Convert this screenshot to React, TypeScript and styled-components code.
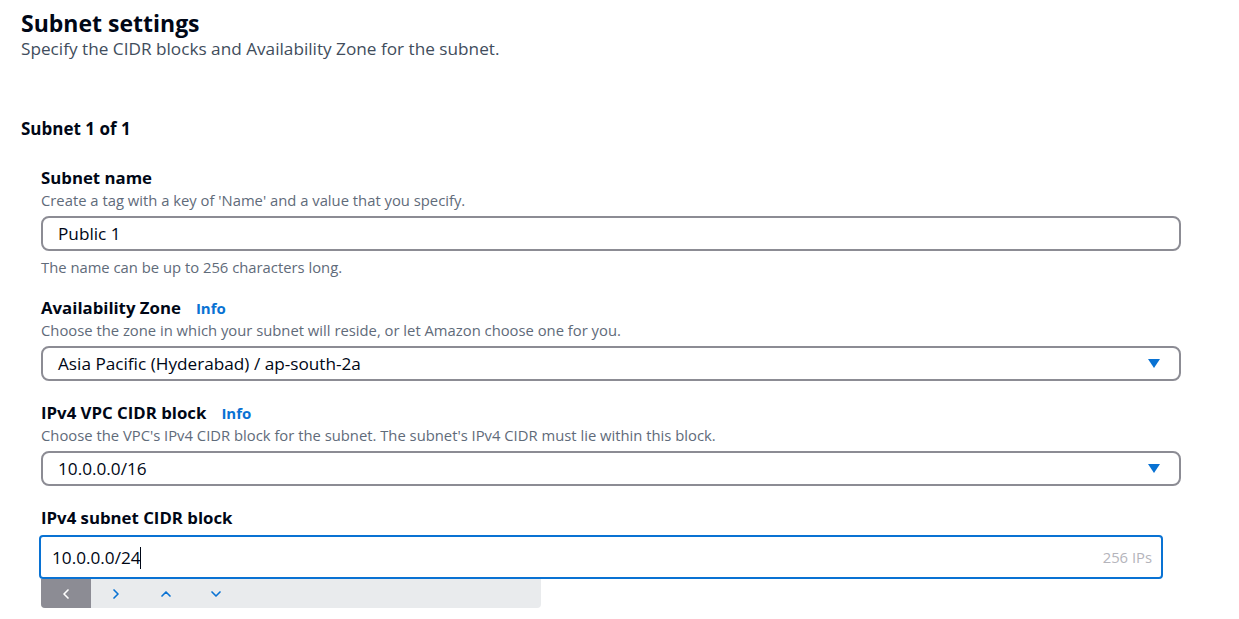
import React from "react";
import styled, { createGlobalStyle } from "styled-components";
import { ChevronLeft, ChevronRight, ChevronUp, ChevronDown } from "lucide-react";

const colors = {
	text: "#000716",
	sub: "#414d5c",
	muted: "#5f6b7a",
	border: "#8c8c94",
	blue: "#0972d3",
	toolbar: "#e9ebed",
	placeholder: "#b4b4bb",
};

const GlobalStyle = createGlobalStyle`
	body {
		margin: 0;
		background: #ffffff;
		font-family: "Open Sans", "Noto Sans", sans-serif;
		color: ${colors.text};
	}
`;

const Styled = {
	Page: styled("div")({
		padding: "8px 0 0 21px",
		width: "1160px",
	}),
	Title: styled("h2")({
		margin: 0,
		fontSize: "23px",
		lineHeight: "30px",
		fontWeight: 700,
	}),
	Subtitle: styled("p")({
		margin: 0,
		fontSize: "17.2px",
		lineHeight: "22px",
		color: colors.sub,
	}),
	SectionHeading: styled("h3")({
		margin: "58px 0 0",
		fontSize: "17px",
		lineHeight: "22px",
		fontWeight: 700,
	}),
	Fields: styled("div")({
		display: "flex",
		flexDirection: "column",
		gap: "21px",
		padding: "27px 0 0 20px",
	}),
	Field: styled("div")({
		display: "flex",
		flexDirection: "column",
	}),
	Label: styled("label")({
		display: "flex",
		alignItems: "baseline",
		gap: "15px",
		fontSize: "16.8px",
		lineHeight: "22px",
		fontWeight: 700,
	}),
	Info: styled("span")({
		fontSize: "15px",
		fontWeight: 700,
		color: colors.blue,
	}),
	Description: styled("div")({
		marginTop: "1px",
		fontSize: "14.8px",
		lineHeight: "20px",
		color: colors.muted,
	}),
	Box: styled("div")({
		marginTop: "6px",
		height: "35px",
		boxSizing: "border-box",
		border: `2px solid ${colors.border}`,
		borderRadius: "8px",
		display: "flex",
		alignItems: "center",
		justifyContent: "space-between",
		padding: "0 19px 0 15px",
		fontSize: "17.2px",
	}),
	Caret: styled("span")({
		display: "block",
		width: 0,
		height: 0,
		borderLeft: "6.5px solid transparent",
		borderRight: "6.5px solid transparent",
		borderTop: `9px solid ${colors.blue}`,
	}),
	Hint: styled("div")({
		marginTop: "7px",
		fontSize: "14.8px",
		lineHeight: "18px",
		color: colors.muted,
	}),
	Suggest: styled("div")({
		marginTop: "6px",
		marginLeft: "-2px",
		width: "1124px",
	}),
	FocusedInput: styled("div")({
		height: "44px",
		boxSizing: "border-box",
		border: `2px solid ${colors.blue}`,
		borderRadius: "4px",
		display: "flex",
		alignItems: "center",
		justifyContent: "space-between",
		padding: "0 9px 0 11px",
		fontSize: "17.2px",
	}),
	Cursor: styled("span")({
		display: "inline-block",
		width: "1px",
		height: "22px",
		marginLeft: "-1px",
		background: colors.text,
		verticalAlign: "-5px",
	}),
	Count: styled("span")({
		fontSize: "14.8px",
		color: colors.placeholder,
	}),
	Toolbar: styled("div")({
		marginLeft: "2px",
		width: "500px",
		height: "29px",
		display: "flex",
		background: colors.toolbar,
		borderRadius: "0 0 4px 4px",
		overflow: "hidden",
	}),
	ToolButton: styled("div")<{ $active?: boolean }>(({ $active }) => ({
		width: "50px",
		display: "flex",
		alignItems: "center",
		justifyContent: "center",
		background: $active ? colors.border : "transparent",
		color: $active ? "#ffffff" : colors.blue,
	})),
};

export default function App() {
	return (
		<Styled.Page>
			<GlobalStyle />
			<Styled.Title>Subnet settings</Styled.Title>
			<Styled.Subtitle>Specify the CIDR blocks and Availability Zone for the subnet.</Styled.Subtitle>
			<Styled.SectionHeading>Subnet 1 of 1</Styled.SectionHeading>
			<Styled.Fields>
				<Styled.Field>
					<Styled.Label>Subnet name</Styled.Label>
					<Styled.Description>Create a tag with a key of 'Name' and a value that you specify.</Styled.Description>
					<Styled.Box>Public 1</Styled.Box>
					<Styled.Hint>The name can be up to 256 characters long.</Styled.Hint>
				</Styled.Field>
				<Styled.Field>
					<Styled.Label>
						Availability Zone <Styled.Info>Info</Styled.Info>
					</Styled.Label>
					<Styled.Description>
						Choose the zone in which your subnet will reside, or let Amazon choose one for you.
					</Styled.Description>
					<Styled.Box>
						Asia Pacific (Hyderabad) / ap-south-2a
						<Styled.Caret />
					</Styled.Box>
				</Styled.Field>
				<Styled.Field>
					<Styled.Label>
						IPv4 VPC CIDR block <Styled.Info>Info</Styled.Info>
					</Styled.Label>
					<Styled.Description>
						Choose the VPC's IPv4 CIDR block for the subnet. The subnet's IPv4 CIDR must lie within this block.
					</Styled.Description>
					<Styled.Box>
						10.0.0.0/16
						<Styled.Caret />
					</Styled.Box>
				</Styled.Field>
				<Styled.Field>
					<Styled.Label>IPv4 subnet CIDR block</Styled.Label>
					<Styled.Suggest>
						<Styled.FocusedInput>
							<span>
								10.0.0.0/24
								<Styled.Cursor />
							</span>
							<Styled.Count>256 IPs</Styled.Count>
						</Styled.FocusedInput>
						<Styled.Toolbar>
							<Styled.ToolButton $active>
								<ChevronLeft size={16} strokeWidth={2.5} />
							</Styled.ToolButton>
							<Styled.ToolButton>
								<ChevronRight size={16} strokeWidth={2.5} />
							</Styled.ToolButton>
							<Styled.ToolButton>
								<ChevronUp size={16} strokeWidth={2.5} />
							</Styled.ToolButton>
							<Styled.ToolButton>
								<ChevronDown size={16} strokeWidth={2.5} />
							</Styled.ToolButton>
						</Styled.Toolbar>
					</Styled.Suggest>
				</Styled.Field>
			</Styled.Fields>
		</Styled.Page>
	);
}
